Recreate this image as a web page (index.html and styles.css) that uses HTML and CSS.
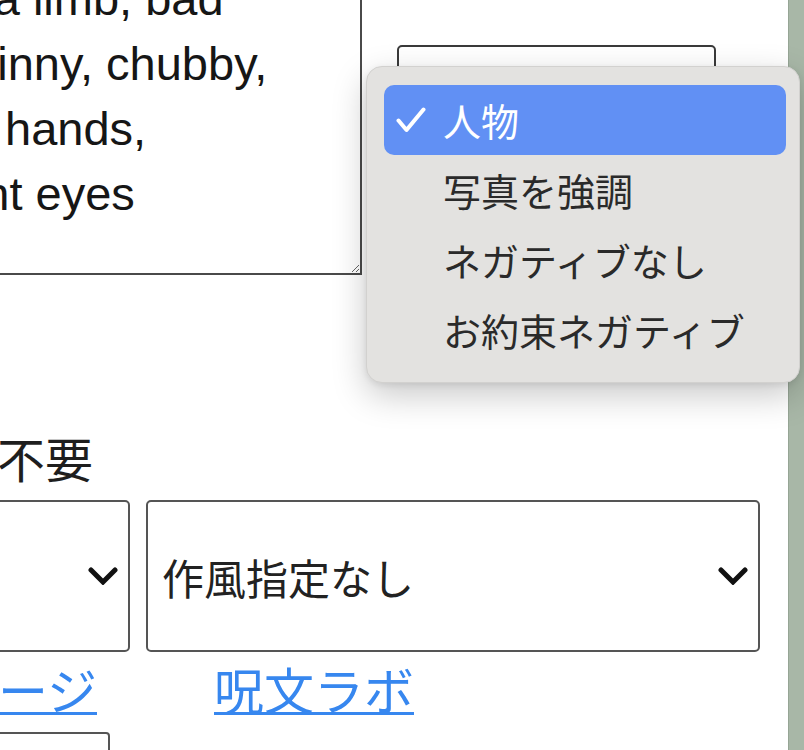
FILE: index.html
```html
<!DOCTYPE html>
<html lang="ja">
<head>
<meta charset="utf-8">
<title>呪文ラボ</title>
<link rel="stylesheet" href="styles.css">
</head>
<body>
<div class="app">
  <main class="main">
    <div class="content">
      <div class="top-row">
        <textarea class="prompt" wrap="off" spellcheck="false">bad anatomy, extra limb, bad
bad proportion, skinny, chubby,
extra fingers, ugly hands,
long torso, different eyes</textarea>
        <div class="preset">
          <div class="preset-select"></div>
          <ul class="menu">
            <li class="menu-item is-selected">
              <svg class="check" viewBox="0 0 30 26" aria-hidden="true"><polyline points="2.5,13.5 10.5,23 27.5,2.5"/></svg>
              人物
            </li>
            <li class="menu-item">写真を強調</li>
            <li class="menu-item">ネガティブなし</li>
            <li class="menu-item">お約束ネガティブ</li>
          </ul>
        </div>
      </div>

      <label class="opt">ネガティブ翻訳は不要</label>

      <div class="selects">
        <div class="select-wrap">
          <select class="select"><option>画質指定なし</option></select>
          <svg class="chev" viewBox="0 0 30 18" aria-hidden="true"><polyline points="3,3 15,15 27,3"/></svg>
        </div>
        <div class="select-wrap">
          <select class="select"><option>作風指定なし</option></select>
          <svg class="chev" viewBox="0 0 30 18" aria-hidden="true"><polyline points="3,3 15,15 27,3"/></svg>
        </div>
      </div>

      <nav class="links">
        <a class="link" href="#">トップページ</a>
        <a class="link" href="#">呪文ラボ</a>
      </nav>

      <div class="bottom-box"></div>
    </div>
  </main>
  <div class="strip"></div>
</div>
</body>
</html>
```

FILE: styles.css
```css
html, body {
  margin: 0;
  padding: 0;
  background: #ffffff;
}

body {
  overflow: hidden;
  font-family: "Noto Sans CJK JP", "Noto Sans", sans-serif;
  color: #222;
}

.app {
  display: flex;
  width: 804px;
  height: 750px;
  overflow: hidden;
}

.main {
  flex: 1;
  min-width: 0;
}

.content {
  width: 1208px;
  margin-left: -420px;
  margin-top: -50px;
  padding-left: 30px;
  box-sizing: border-box;
}

/* top row */
.top-row {
  display: flex;
  align-items: flex-start;
}

.prompt {
  display: block;
  box-sizing: border-box;
  width: 752px;
  height: 325px;
  margin: 0;
  padding: 14px 9px 20px 9px;
  border: 2px solid #4a4a4a;
  border-radius: 0;
  background: #fff;
  color: #161616;
  font-family: "Liberation Sans", Arial, sans-serif;
  font-size: 47px;
  line-height: 65px;
  white-space: pre;
  overflow: hidden;
  resize: both;
  outline: none;
}

.preset {
  position: relative;
  flex: 1;
  padding-left: 35px;
  padding-top: 95px;
}

.preset-select {
  width: 319px;
  height: 152px;
  box-sizing: border-box;
  border: 2px solid #3a3a3a;
  border-radius: 5px;
  background: #fff;
}

.menu {
  position: absolute;
  left: 4px;
  top: 116px;
  width: 434px;
  height: 317px;
  box-sizing: border-box;
  margin: 0;
  padding: 18px 13px 18px 17px;
  list-style: none;
  background: #e3e2e0;
  border: 1px solid #d2d1cf;
  border-radius: 16px;
  box-shadow: 0 12px 34px rgba(0, 0, 0, 0.22), 0 2px 6px rgba(0, 0, 0, 0.08);
  z-index: 10;
}

.menu-item {
  display: flex;
  align-items: center;
  height: 70px;
  padding-left: 59px;
  font-size: 38px;
  line-height: 70px;
  color: #2a2a2a;
  border-radius: 10px;
  position: relative;
}

.menu-item.is-selected {
  background: #6190f4;
  color: #fff;
}

.check {
  position: absolute;
  left: 12px;
  top: 22px;
  width: 30px;
  height: 26px;
}

.check polyline {
  fill: none;
  stroke: #fff;
  stroke-width: 4;
  stroke-linecap: round;
  stroke-linejoin: round;
}

/* option label */
.opt {
  display: block;
  margin-top: 152px;
  padding-left: 6px;
  font-size: 48px;
  line-height: 60px;
  color: #1e1e1e;
  white-space: nowrap;
}

/* selects */
.selects {
  display: grid;
  grid-template-columns: 520px 614px;
  column-gap: 16px;
  margin-top: 13px;
}

.select-wrap {
  position: relative;
}

.select {
  display: block;
  width: 100%;
  height: 152px;
  box-sizing: border-box;
  margin: 0;
  padding: 0 60px 0 14px;
  border: 2px solid #555;
  border-radius: 5px;
  background: #fff;
  color: #222;
  font-family: "Noto Sans CJK JP", sans-serif;
  font-size: 42px;
  -webkit-appearance: none;
  appearance: none;
  outline: none;
}

.chev {
  position: absolute;
  right: 12px;
  top: 50%;
  width: 30px;
  height: 18px;
  transform: translateY(-50%);
  pointer-events: none;
}

.chev polyline {
  fill: none;
  stroke: #111;
  stroke-width: 5;
  stroke-linecap: round;
  stroke-linejoin: miter;
}

/* links */
.links {
  display: flex;
  gap: 117px;
  margin-top: 6px;
  padding-left: 188px;
  font-size: 50px;
  line-height: 60px;
  white-space: nowrap;
}

.link {
  color: #3787ef;
  text-decoration: underline;
  text-decoration-thickness: 3px;
}

.bottom-box {
  width: 500px;
  height: 80px;
  margin-top: 14px;
  box-sizing: border-box;
  border: 2px solid #555;
  border-radius: 4px;
}

/* right strip */
.strip {
  flex: 0 0 16px;
  background: #a8b7a7;
  border-left: 1px solid #96a595;
  box-sizing: border-box;
}
```
